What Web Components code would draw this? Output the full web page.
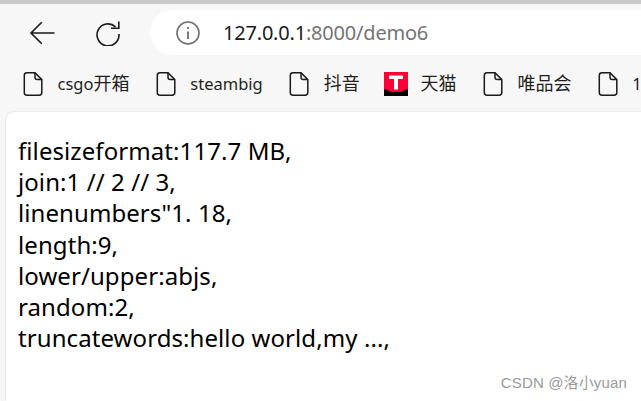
<!DOCTYPE html>
<html lang="zh">
<head>
<meta charset="utf-8">
<title>demo6</title>
<style>
    html, body { margin: 0; height: 401px; overflow: hidden; }
    body { font-family: "Noto Sans", "Noto Sans CJK SC", sans-serif; background: #f7f7f7; }
    .zh { font-size: 18px; }
</style>
</head>
<body>
<browser-window>
    <nav-bar slot="chrome"></nav-bar>
    <bookmark-bar slot="chrome">
        <book-mark>csgo<span class="zh">开箱</span></book-mark>
        <book-mark>steambig</book-mark>
        <book-mark><span class="zh">抖音</span></book-mark>
        <book-mark icon="tmall"><span class="zh">天猫</span></book-mark>
        <book-mark><span class="zh">唯品会</span></book-mark>
        <book-mark>1688</book-mark>
    </bookmark-bar>
    <page-card>
        <div>filesizeformat:117.7 MB,</div>
        <div>join:1 // 2 // 3,</div>
        <div>linenumbers"1. 18,</div>
        <div>length:9,</div>
        <div>lower/upper:abjs,</div>
        <div>random:2,</div>
        <div>truncatewords:hello world,my ...,</div>
    </page-card>
</browser-window>
<script>
class BrowserWindow extends HTMLElement {
    connectedCallback() {
        if (this.shadowRoot) return;
        const root = this.attachShadow({ mode: 'open' });
        root.innerHTML = `<style>
            :host { display: flex; flex-direction: column; height: 401px; border-top: 4px solid #c9c9c9; box-sizing: border-box; }
        </style><slot name="chrome"></slot><slot></slot>`;
    }
}
class NavBar extends HTMLElement {
    connectedCallback() {
        if (this.shadowRoot) return;
        const root = this.attachShadow({ mode: 'open' });
        root.innerHTML = `<style>
            :host { display: flex; align-items: center; height: 45px; margin-top: 6px; padding-left: 28px; }
            svg { display: block; flex: none; }
            .back { margin-right: 40px; }
            .reload { margin-right: 30px; }
            .omni { flex: 1; height: 45px; display: flex; align-items: center; background: #fff; border-radius: 23px 0 0 23px; padding-left: 26px; }
            .text { margin-left: 23px; font: 400 20px/27px "Noto Sans", sans-serif; letter-spacing: -.2px; color: #1b1b1b; white-space: nowrap; }
            .dim { color: #747474; }
        </style>
        <svg class="back" width="28" height="24" viewBox="0 0 28 24" fill="none" stroke="#1a1a1a" stroke-width="1.6"><path d="M3 12H26.500M13.800 1.300L3 12L13.800 22.700"/></svg>
        <svg class="reload" width="24" height="26" viewBox="0 0 24 26" fill="none" stroke="#1a1a1a" stroke-width="1.6"><path d="M19.500 6.800A11 11 0 1 0 23 14"/><path d="M22.800 1.500V8.300H15"/></svg>
        <div class="omni">
            <svg width="24" height="24" viewBox="0 0 24 24" fill="none" stroke="#6f6f6f" stroke-width="1.6"><circle cx="12" cy="12" r="11"/><path d="M12 10.500V18M12 6V8" stroke-width="1.8"/></svg>
            <span class="text">127.0.0.1<span class="dim">:8000/demo6</span></span>
        </div>`;
    }
}
class BookmarkBar extends HTMLElement {
    connectedCallback() {
        if (this.shadowRoot) return;
        const root = this.attachShadow({ mode: 'open' });
        root.innerHTML = `<style>
            :host { display: flex; align-items: center; height: 57px; padding-left: 21px; gap: 24.400px; overflow: hidden; white-space: nowrap; }
        </style><slot></slot>`;
    }
}
class BookMark extends HTMLElement {
    connectedCallback() {
        if (this.shadowRoot) return;
        const root = this.attachShadow({ mode: 'open' });
        const tmall = `<svg width="24" height="24" viewBox="0 0 24 24"><rect width="24" height="24" fill="#ff0036"/><path d="M0 17.500H3Q5 20 8 20H16Q19 20 21 17.500H24V24H0Z" fill="#000"/><path d="M5 3.500H19V7H14V17.500H10V7H5Z" fill="#fff"/></svg>`;
        const page = `<svg width="24" height="24" viewBox="0 0 24 24" fill="none" stroke="#1a1a1a" stroke-width="1.5"><path d="M6 .8H14L20.800 7.600V20.500A2.700 2.700 0 0 1 18.100 23.200H6A2.700 2.700 0 0 1 3.300 20.500V3.500A2.700 2.700 0 0 1 6 .8Z"/><path d="M14 .8V5.300A2.300 2.300 0 0 0 16.300 7.600H20.800"/></svg>`;
        root.innerHTML = `<style>
            :host { display: flex; align-items: center; gap: 12.500px; flex: none; font: 400 16.500px/24px "Noto Sans", "Noto Sans CJK SC", sans-serif; color: #1f1f1f; }
            svg { display: block; flex: none; }
        </style>${this.getAttribute('icon') === 'tmall' ? tmall : page}<span><slot></slot></span>`;
    }
}
class PageCard extends HTMLElement {
    connectedCallback() {
        if (this.shadowRoot) return;
        const root = this.attachShadow({ mode: 'open' });
        root.innerHTML = `<style>
            :host { display: block; position: relative; flex: 1; margin-left: 6px; background: #fff; border-radius: 8px 0 0 0; box-shadow: 0 0 2px rgba(0,0,0,.18); padding: 23px 0 0 12px; font: 400 24px/31.200px "Noto Sans", sans-serif; letter-spacing: .08px; color: #000; }
            .mark { position: absolute; right: 14px; bottom: 9px; font: 400 15px/18px "Liberation Sans", "Noto Sans CJK SC", sans-serif; letter-spacing: .15px; color: #9a9a9a; }
        </style><slot></slot><span class="mark">CSDN @洛小yuan</span>`;
    }
}
customElements.define('browser-window', BrowserWindow);
customElements.define('nav-bar', NavBar);
customElements.define('bookmark-bar', BookmarkBar);
customElements.define('book-mark', BookMark);
customElements.define('page-card', PageCard);
</script>
</body>
</html>
